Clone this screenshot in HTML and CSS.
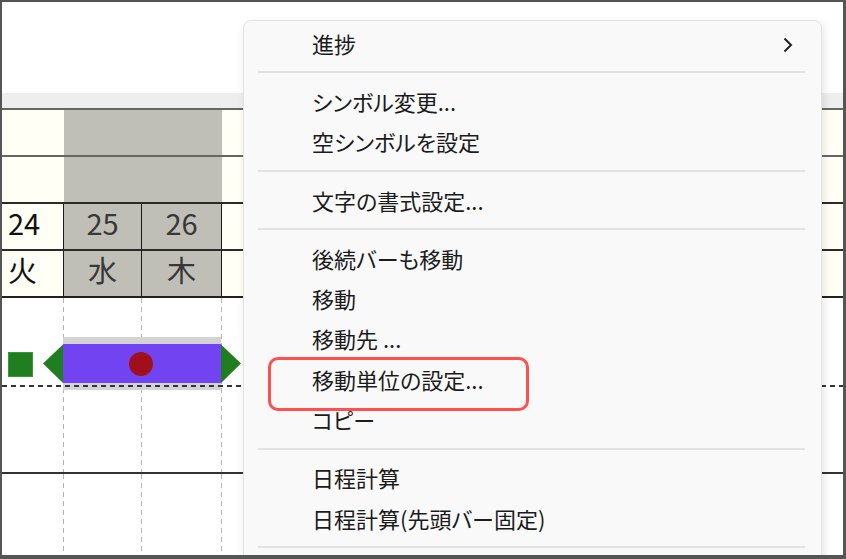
FILE: index.html
```html
<!DOCTYPE html>
<html lang="ja">
<head>
<meta charset="utf-8">
<title>Gantt context menu</title>
<link rel="stylesheet" href="styles.css">
</head>
<body>
<div class="frame">
  <div class="app">
    <div class="toolbar"></div>
    <div class="strip"></div>
    <div class="grid">
      <div class="row r1">
        <div class="cell c0"></div>
        <div class="cell gray span2"></div>
        <div class="cell c3"></div>
      </div>
      <div class="row r2">
        <div class="cell c0"></div>
        <div class="cell gray span2"></div>
        <div class="cell c3"></div>
      </div>
      <div class="row r3">
        <div class="cell c0">24</div>
        <div class="cell c1 gray boxed">25</div>
        <div class="cell c2 gray boxed">26</div>
        <div class="cell c3"></div>
      </div>
      <div class="row r4">
        <div class="cell c0">火</div>
        <div class="cell c1 gray boxed">水</div>
        <div class="cell c2 gray boxed">木</div>
        <div class="cell c3"><span class="dot"></span></div>
      </div>
    </div>
    <div class="chart">
      <div class="lane l1">
        <div class="col c0"></div>
        <div class="col c1"></div>
        <div class="col c2"></div>
        <div class="col c3"></div>
      </div>
      <div class="lane l2">
        <div class="col c0"></div>
        <div class="col c1"></div>
        <div class="col c2"></div>
        <div class="col c3"></div>
      </div>
      <svg class="bar" width="250" height="70" viewBox="2 330 250 70" aria-hidden="true">
        <rect x="63" y="337" width="158" height="53" fill="#d3d3d3"/>
        <rect x="8.5" y="352.5" width="24" height="24" fill="#1f7e1f" stroke="#3a963a" stroke-width="1"/>
        <polygon points="63,344.5 43,363.5 63,383" fill="#1f7e1f"/>
        <polygon points="221,344.5 241,363.5 221,383" fill="#1f7e1f"/>
        <rect x="63" y="344" width="158" height="39" fill="#7244f1"/>
        <circle cx="141" cy="364" r="12" fill="#a0101c"/>
      </svg>
      <div class="progress-line"></div>
    </div>
  </div>

  <div class="menu">
    <div class="item">進捗<svg class="chev" width="10" height="16" viewBox="0 0 10 16"><polyline points="1.5,1.5 8,8 1.5,14.5" fill="none" stroke="#222" stroke-width="2"/></svg></div>
    <div class="sep"></div>
    <div class="item">シンボル変更...</div>
    <div class="item">空シンボルを設定</div>
    <div class="sep"></div>
    <div class="item">文字の書式設定...</div>
    <div class="sep"></div>
    <div class="item">後続バーも移動</div>
    <div class="item">移動</div>
    <div class="item">移動先 ...</div>
    <div class="item">移動単位の設定...</div>
    <div class="item">コピー</div>
    <div class="sep"></div>
    <div class="item">日程計算</div>
    <div class="item">日程計算(先頭バー固定)</div>
    <div class="sep"></div>
    <div class="item">&nbsp;</div>
  </div>
  <div class="highlight"></div>
</div>
</body>
</html>
```

FILE: styles.css
```css
html, body {
  margin: 0;
  padding: 0;
  background: #ffffff;
}

.frame {
  position: relative;
  width: 846px;
  height: 559px;
  box-sizing: border-box;
  border-style: solid;
  border-color: #555555;
  border-width: 2px 3px 4px 2px;
  overflow: hidden;
  font-family: "Noto Sans CJK JP", "Noto Sans", sans-serif;
}

.app {
  display: flex;
  flex-direction: column;
  height: 100%;
}

.toolbar {
  height: 91px;
  background: #ffffff;
}

.strip {
  height: 15px;
  background: #eeeeee;
}

.grid {
  display: flex;
  flex-direction: column;
}

.row {
  display: flex;
  height: 45px;
  border-top: 2px solid #666666;
  background: #fffff5;
}

.r3, .r4 {
  border-top-color: #2a2a2a;
}

.cell {
  box-sizing: border-box;
  display: flex;
  align-items: center;
  font-size: 29px;
  color: #111111;
  line-height: 1;
  padding-bottom: 8px;
}

.c0 {
  width: 62px;
  padding-left: 6px;
  flex: none;
}

.c1 {
  width: 78px;
  flex: none;
}

.c2 {
  width: 80px;
  flex: none;
}

.c3 {
  flex: 1;
  position: relative;
}

.span2 {
  width: 158px;
  flex: none;
}

.gray {
  background: #bfbfb7;
}

.boxed {
  justify-content: center;
  color: #383838;
  border-right: 1px solid #1a1a1a;
}

.r3 .c1, .r4 .c1 {
  border-left: 1px solid #1a1a1a;
  width: 79px;
  margin-left: -1px;
}

.dot {
  position: absolute;
  left: 598px;
  top: 16px;
  width: 2px;
  height: 2px;
  background: #4a90e2;
}

.chart {
  position: relative;
  flex: 1;
  display: flex;
  flex-direction: column;
  border-top: 2px solid #222222;
}

.lane {
  display: flex;
}

.l1 {
  height: 174px;
  border-bottom: 2px solid #333333;
}

.l2 {
  flex: 1;
}

.col {
  box-sizing: border-box;
  background-image: repeating-linear-gradient(to bottom, #b4b4b4 0 5px, transparent 5px 9px);
  background-size: 1px 100%;
  background-position: right top;
  background-repeat: no-repeat;
}

.col.c3 {
  background-image: none;
}

.bar {
  position: absolute;
  left: 0;
  top: 32px;
  display: block;
}

.progress-line {
  position: absolute;
  left: 0;
  right: 0;
  top: 87px;
  height: 2px;
  background-image: repeating-linear-gradient(to right, #333333 0 5px, transparent 5px 9px);
}

.menu {
  position: absolute;
  left: 241px;
  top: 18px;
  width: 579px;
  bottom: -60px;
  box-sizing: border-box;
  background: #f9f9f9;
  border: 1px solid #e2e2e2;
  border-radius: 8px;
  box-shadow: 2px 3px 8px rgba(0, 0, 0, 0.10);
  padding-top: 5px;
  font-size: 22px;
  font-feature-settings: "palt";
  color: #1b1b1b;
}

.item {
  box-sizing: border-box;
  height: 40.3px;
  display: flex;
  align-items: center;
  padding-left: 68px;
  padding-right: 28px;
  padding-bottom: 7px;
  white-space: nowrap;
}

.chev {
  margin-left: auto;
  display: block;
  margin-top: 4px;
}

.sep {
  height: 2px;
  background: #e2e2e2;
  margin: 5px 16px 11px 14px;
}

.highlight {
  position: absolute;
  left: 266px;
  top: 355px;
  width: 261px;
  height: 54px;
  box-sizing: border-box;
  border: 3px solid #ff5050;
  border-radius: 10px;
  pointer-events: none;
}
```
